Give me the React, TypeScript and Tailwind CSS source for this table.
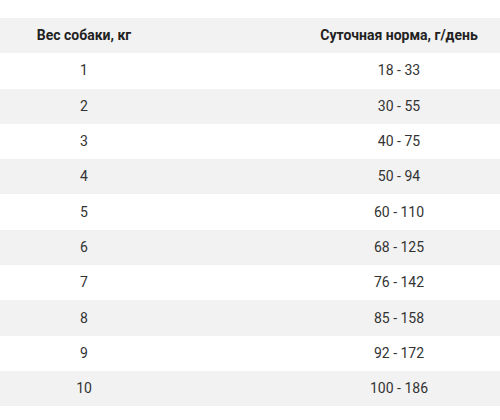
const rows: [string, string][] = [
  ["1", "18 - 33"],
  ["2", "30 - 55"],
  ["3", "40 - 75"],
  ["4", "50 - 94"],
  ["5", "60 - 110"],
  ["6", "68 - 125"],
  ["7", "76 - 142"],
  ["8", "85 - 158"],
  ["9", "92 - 172"],
  ["10", "100 - 186"],
];

const App = () => {
  return (
    <div className="w-[500px] h-[420px] bg-white overflow-hidden pt-[18px] font-['Roboto',sans-serif] text-[14px] text-[#333]">
      <div className="w-[630px]">
        <div className="grid grid-cols-[168px_462px] h-[35.3px] items-center bg-[#f2f2f2] font-bold text-[#222]">
          <div className="text-center">Вес собаки, кг</div>
          <div className="text-center">Суточная норма, г/день</div>
        </div>
        {rows.map(([kg, norm], i) => (
          <div
            key={kg}
            className={`grid grid-cols-[168px_462px] h-[35.3px] items-center ${i % 2 === 1 ? "bg-[#f2f2f2]" : "bg-white"}`}
          >
            <div className="text-center">{kg}</div>
            <div className="text-center">{norm}</div>
          </div>
        ))}
      </div>
    </div>
  );
};

export default App;
